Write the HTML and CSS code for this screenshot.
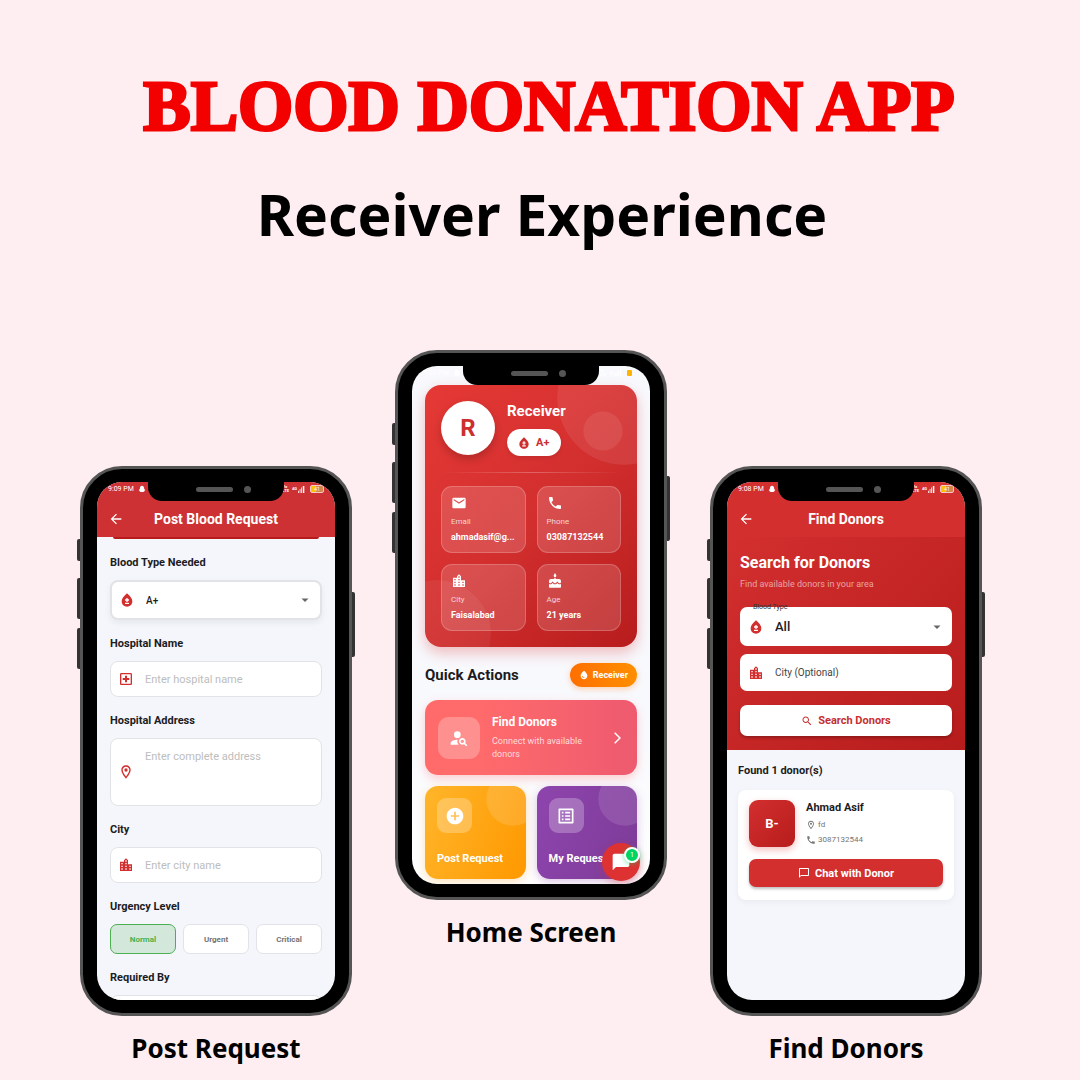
FILE: index.html
```html
<!DOCTYPE html>
<html lang="en">
<head>
<meta charset="utf-8">
<meta name="viewport" content="width=device-width, initial-scale=1">
<title>Blood Donation App</title>
<link rel="stylesheet" href="styles.css">
</head>
<body>
<svg class="sprite" aria-hidden="true">
  <symbol id="back" viewBox="0 0 24 24"><path d="M20 11H7.83l5.59-5.59L12 4l-8 8 8 8 1.41-1.41L7.83 13H20v-2z"/></symbol>
  <symbol id="blood" viewBox="0 0 24 24"><path fill-rule="evenodd" d="M12 2c-5.33 4.55-8 8.48-8 11.8 0 4.98 3.8 8.2 8 8.2s8-3.22 8-8.2c0-3.32-2.67-7.25-8-11.8zM15 18H9v-2h6zM15 13h-2v2h-2v-2H9v-2h2V9h2v2h2z"/></symbol>
  <symbol id="hospital" viewBox="0 0 24 24"><path d="M19 3H5c-1.1 0-1.99.9-1.99 2L3 19c0 1.1.9 2 2 2h14c1.1 0 2-.9 2-2V5c0-1.1-.9-2-2-2zm0 16H5V5h14v14zm-8.5-2h3v-3.5H17v-3h-3.5V7h-3v3.5H7v3h3.5z"/></symbol>
  <symbol id="pin" viewBox="0 0 24 24"><path d="M12 2C8.13 2 5 5.13 5 9c0 5.25 7 13 7 13s7-7.75 7-13c0-3.87-3.13-7-7-7zM7 9c0-2.76 2.24-5 5-5s5 2.24 5 5c0 2.88-2.88 7.19-5 9.88C9.92 16.21 7 11.85 7 9z"/><circle cx="12" cy="9" r="2.5"/></symbol>
  <symbol id="city" viewBox="0 0 24 24"><path d="M15 11V5l-3-3-3 3v2H3v14h18V11h-6zm-8 8H5v-2h2v2zm0-4H5v-2h2v2zm0-4H5V9h2v2zm6 8h-2v-2h2v2zm0-4h-2v-2h2v2zm0-4h-2V9h2v2zm0-4h-2V5h2v2zm6 12h-2v-2h2v2zm0-4h-2v-2h2v2z"/></symbol>
  <symbol id="mail" viewBox="0 0 24 24"><path d="M20 4H4c-1.1 0-1.99.9-1.99 2L2 18c0 1.1.9 2 2 2h16c1.1 0 2-.9 2-2V6c0-1.1-.9-2-2-2zm0 4l-8 5-8-5V6l8 5 8-5v2z"/></symbol>
  <symbol id="call" viewBox="0 0 24 24"><path d="M6.62 10.79c1.44 2.83 3.76 5.14 6.59 6.59l2.2-2.2c.27-.27.67-.36 1.02-.24 1.12.37 2.33.57 3.57.57.55 0 1 .45 1 1V20c0 .55-.45 1-1 1-9.39 0-17-7.61-17-17 0-.55.45-1 1-1h3.5c.55 0 1 .45 1 1 0 1.25.2 2.45.57 3.57.11.35.03.74-.25 1.02l-2.2 2.2z"/></symbol>
  <symbol id="cake" viewBox="0 0 24 24"><path d="M12 6c1.11 0 2-.9 2-2 0-.38-.1-.73-.29-1.03L12 0l-1.71 2.97c-.19.3-.29.65-.29 1.03 0 1.1.9 2 2 2zm4.6 9.99l-1.07-1.07-1.08 1.07c-1.3 1.3-3.58 1.31-4.89 0l-1.07-1.07-1.09 1.07C6.75 16.64 5.88 17 4.96 17c-.73 0-1.4-.23-1.96-.61V21c0 .55.45 1 1 1h16c.55 0 1-.45 1-1v-4.61c-.56.38-1.23.61-1.96.61-.92 0-1.79-.36-2.44-1.01zM18 9h-5V7h-2v2H6c-1.66 0-3 1.34-3 3v1.54c0 1.08.88 1.96 1.96 1.96.52 0 1.02-.2 1.38-.57l2.14-2.13 2.13 2.13c.74.74 2.03.74 2.77 0l2.14-2.13 2.13 2.13c.37.37.86.57 1.38.57 1.08 0 1.96-.88 1.96-1.96V12C21 10.34 19.66 9 18 9z"/></symbol>
  <symbol id="person-search" viewBox="0 0 24 24"><circle cx="10" cy="8" r="4"/><path d="M10.35 14.01C7.62 13.91 2 15.27 2 18v2h9.54c-2.47-2.76-1.23-5.89-1.19-5.99zm9.08 4.01c.36-.59.57-1.28.57-2.02 0-2.21-1.79-4-4-4s-4 1.79-4 4 1.79 4 4 4c.74 0 1.43-.22 2.02-.57L20.59 22 22 20.59l-2.57-2.57zM16 18c-1.1 0-2-.9-2-2s.9-2 2-2 2 .9 2 2-.9 2-2 2z"/></symbol>
  <symbol id="drop" viewBox="0 0 24 24"><path fill-rule="evenodd" d="M12 2c-5.33 4.55-8 8.48-8 11.8 0 4.98 3.8 8.2 8 8.2s8-3.22 8-8.2c0-3.32-2.67-7.25-8-11.8zM7.83 14c.37 0 .67.26.74.62.41 2.22 2.28 2.98 3.64 2.87.43-.02.79.32.79.75 0 .4-.32.73-.72.75-2.13.13-4.62-1.09-5.19-4.12-.08-.45.28-.87.74-.87z"/></symbol>
  <symbol id="add" viewBox="0 0 24 24"><path d="M12 2C6.48 2 2 6.48 2 12s4.48 10 10 10 10-4.48 10-10S17.52 2 12 2zm5 11h-4v4h-2v-4H7v-2h4V7h2v4h4v2z"/></symbol>
  <symbol id="list" viewBox="0 0 24 24"><path d="M19 5v14H5V5h14m1.1-2H3.9c-.5 0-.9.4-.9.9v16.2c0 .4.4.9.9.9h16.2c.4 0 .9-.5.9-.9V3.9c0-.5-.5-.9-.9-.9zM11 7h6v2h-6V7zm0 4h6v2h-6v-2zm0 4h6v2h-6zM7 7h2v2H7zm0 4h2v2H7zm0 4h2v2H7z"/></symbol>
  <symbol id="chat" viewBox="0 0 24 24"><path d="M20 2H4c-1.1 0-2 .9-2 2v18l4-4h14c1.1 0 2-.9 2-2V4c0-1.1-.9-2-2-2z"/></symbol>
  <symbol id="chat-outline" viewBox="0 0 24 24"><path d="M20 2H4c-1.1 0-2 .9-2 2v18l4-4h14c1.1 0 2-.9 2-2V4c0-1.1-.9-2-2-2zm0 14H6l-2 2V4h16v12z"/></symbol>
  <symbol id="search" viewBox="0 0 24 24"><path d="M15.5 14h-.79l-.28-.27C15.41 12.59 16 11.11 16 9.5 16 5.91 13.09 3 9.5 3S3 5.91 3 9.5 5.91 16 9.5 16c1.61 0 3.09-.59 4.23-1.57l.27.28v.79l5 4.99L20.49 19l-4.99-5zm-6 0C7.01 14 5 11.99 5 9.5S7.01 5 9.5 5 14 7.01 14 9.5 11.99 14 9.5 14z"/></symbol>
  <symbol id="caret" viewBox="0 0 24 24"><path d="M5 9l7 7 7-7z"/></symbol>
  <symbol id="chevron" viewBox="0 0 24 24"><path d="M8 3l9 9-9 9" fill="none" stroke="currentColor" stroke-width="2.6"/></symbol>
  <symbol id="ghost" viewBox="0 0 24 24"><path d="M12 2c-4 0-6 3-6 6v3l-3 1 2 3-3 3 4 1 1 2h10l1-2 4-1-3-3 2-3-3-1V8c0-3-2-6-6-6z"/></symbol>
  <symbol id="bars" viewBox="0 0 10 9"><path d="M0 6h1v3H0zM2 4h1v5H2zM4 2h1v7H4zM6 0h2v9H6z"/></symbol>
</svg>

<header class="intro">
  <h1 class="title">BLOOD DONATION APP</h1>
  <p class="subtitle">Receiver Experience</p>
</header>

<main class="gallery">
  <figure class="shot">
    <div class="phone">
      <span class="key key-mute"></span><span class="key key-up"></span><span class="key key-down"></span><span class="key key-power"></span>
      <div class="notch"><span class="speaker"></span><span class="camera"></span></div>
      <div class="screen">
        <header class="appbar appbar-post">
          <div class="status"><span>9:09 PM</span><svg class="i-ghost"><use href="#ghost"/></svg><span class="network"><span class="tick"></span><span class="volte">Vo<br>LTE</span><span class="gen">4G</span><svg class="i-bars"><use href="#bars"/></svg></span><span class="battery">41</span></div>
          <div class="appbar-row">
            <button class="back" aria-label="Back"><svg class="i-16"><use href="#back"/></svg></button>
            <h2 class="appbar-title">Post Blood Request</h2>
          </div>
        </header>
        <form class="form">
          <div class="banner-edge"></div>
          <div class="group">
            <label class="label" for="type">Blood Type Needed</label>
            <div class="field field-select raised"><svg class="i-16"><use href="#blood"/></svg><select class="control" id="type"><option>A+</option></select><svg class="i-caret"><use href="#caret"/></svg></div>
          </div>
          <div class="group">
            <label class="label" for="hospital-name">Hospital Name</label>
            <div class="field"><svg class="i-16"><use href="#hospital"/></svg><input class="control" id="hospital-name" type="text" placeholder="Enter hospital name"></div>
          </div>
          <div class="group">
            <label class="label" for="address">Hospital Address</label>
            <div class="field field-area"><svg class="i-16"><use href="#pin"/></svg><textarea class="control" id="address" placeholder="Enter complete address"></textarea></div>
          </div>
          <div class="group">
            <label class="label" for="city-name">City</label>
            <div class="field"><svg class="i-16"><use href="#city"/></svg><input class="control" id="city-name" type="text" placeholder="Enter city name"></div>
          </div>
          <fieldset class="group">
            <legend class="label">Urgency Level</legend>
            <div class="levels">
              <label class="level"><input type="radio" name="urgency" checked>Normal</label>
              <label class="level"><input type="radio" name="urgency">Urgent</label>
              <label class="level"><input type="radio" name="urgency">Critical</label>
            </div>
          </fieldset>
          <div class="group">
            <label class="label" for="required-by">Required By</label>
            <div class="field"><input class="control" id="required-by" type="text"></div>
          </div>
        </form>
      </div>
    </div>
    <figcaption class="caption">Post Request</figcaption>
  </figure>

  <figure class="shot shot-lead">
    <div class="phone">
      <span class="key key-mute"></span><span class="key key-up"></span><span class="key key-down"></span><span class="key key-power"></span>
      <div class="notch"><span class="speaker"></span><span class="camera"></span></div>
      <div class="screen screen-home">
        <div class="status status-home"><span>9:03 PM</span><svg class="i-ghost"><use href="#ghost"/></svg><span class="network"><span class="volte">Vo<br>LTE</span><span class="gen">4G</span><svg class="i-bars"><use href="#bars"/></svg></span><span class="charge"></span></div>
        <div class="home">
          <section class="profile">
            <div class="profile-top">
              <div class="avatar">R</div>
              <div class="who">
                <h2 class="name">Receiver</h2>
                <span class="type-pill"><svg class="i-14"><use href="#blood"/></svg>A+</span>
              </div>
            </div>
            <hr class="rule">
            <dl class="facts">
              <div class="fact"><svg class="i-16"><use href="#mail"/></svg><dt>Email</dt><dd>ahmadasif@g...</dd></div>
              <div class="fact"><svg class="i-16"><use href="#call"/></svg><dt>Phone</dt><dd>03087132544</dd></div>
              <div class="fact"><svg class="i-16"><use href="#city"/></svg><dt>City</dt><dd>Faisalabad</dd></div>
              <div class="fact"><svg class="i-16"><use href="#cake"/></svg><dt>Age</dt><dd>21 years</dd></div>
            </dl>
          </section>
          <div class="section-head">
            <h2 class="section-title">Quick Actions</h2>
            <span class="role"><svg class="i-10"><use href="#drop"/></svg>Receiver</span>
          </div>
          <a class="find" href="#">
            <span class="find-icon"><svg class="i-20"><use href="#person-search"/></svg></span>
            <span class="find-text"><strong>Find Donors</strong><span>Connect with available donors</span></span>
            <svg class="i-14"><use href="#chevron"/></svg>
          </a>
          <div class="tiles">
            <a class="tile tile-post" href="#"><span class="tile-icon"><svg class="i-20"><use href="#add"/></svg></span>Post Request</a>
            <a class="tile tile-mine" href="#"><span class="tile-icon"><svg class="i-20"><use href="#list"/></svg></span>My Requests</a>
          </div>
        </div>
        <button class="fab" aria-label="Messages"><svg class="i-20"><use href="#chat"/></svg><span class="count">1</span></button>
      </div>
    </div>
    <figcaption class="caption">Home Screen</figcaption>
  </figure>

  <figure class="shot">
    <div class="phone">
      <span class="key key-mute"></span><span class="key key-up"></span><span class="key key-down"></span><span class="key key-power"></span>
      <div class="notch"><span class="speaker"></span><span class="camera"></span></div>
      <div class="screen">
        <header class="appbar">
          <div class="status"><span>9:08 PM</span><svg class="i-ghost"><use href="#ghost"/></svg><span class="network"><span class="tick"></span><span class="volte">Vo<br>LTE</span><span class="gen">4G</span><svg class="i-bars"><use href="#bars"/></svg></span><span class="battery">41</span></div>
          <div class="appbar-row">
            <button class="back" aria-label="Back"><svg class="i-16"><use href="#back"/></svg></button>
            <h2 class="appbar-title">Find Donors</h2>
          </div>
        </header>
        <form class="search">
          <h3 class="search-title">Search for Donors</h3>
          <p class="search-note">Find available donors in your area</p>
          <div class="field field-select field-plain"><label class="float" for="donor-type">Blood Type</label><svg class="i-16"><use href="#blood"/></svg><select class="control control-strong" id="donor-type"><option>All</option></select><svg class="i-caret"><use href="#caret"/></svg></div>
          <div class="field field-plain"><svg class="i-16"><use href="#city"/></svg><input class="control control-dark" type="text" aria-label="City" placeholder="City (Optional)"></div>
          <button class="search-go" type="button"><svg class="i-12"><use href="#search"/></svg>Search Donors</button>
        </form>
        <section class="results">
          <h3 class="found">Found 1 donor(s)</h3>
          <article class="donor">
            <div class="donor-top">
              <div class="donor-type">B-</div>
              <div class="donor-info">
                <h4 class="donor-name">Ahmad Asif</h4>
                <p class="donor-line"><svg class="i-10"><use href="#pin"/></svg>fd</p>
                <p class="donor-line"><svg class="i-10"><use href="#call"/></svg>3087132544</p>
              </div>
            </div>
            <button class="donor-chat"><svg class="i-12"><use href="#chat-outline"/></svg>Chat with Donor</button>
          </article>
        </section>
      </div>
    </div>
    <figcaption class="caption">Find Donors</figcaption>
  </figure>
</main>
</body>
</html>
```
FILE: styles.css
```css
* { box-sizing: border-box; }

body {
  margin: 0;
  background: #feeef1;
  color: #000;
  font-family: Roboto, "Liberation Sans", sans-serif;
}

h1, h2, h3, h4, p, dl, dd, figure, fieldset { margin: 0; padding: 0; border: 0; }
button, input, select, textarea { font: inherit; color: inherit; border: 0; margin: 0; padding: 0; background: none; }
a { color: inherit; text-decoration: none; }
svg { fill: currentColor; flex: none; display: block; }
.sprite { position: absolute; width: 0; height: 0; }

.i-10 { width: 10px; height: 10px; }
.i-12 { width: 12px; height: 12px; }
.i-14 { width: 14px; height: 14px; }
.i-16 { width: 16px; height: 16px; }
.i-20 { width: 20px; height: 20px; }
.i-caret { width: 12px; height: 12px; color: #666; }

/* Heading */
.intro { padding: 66px 24px 100px; text-align: center; }
.title {
  font: 700 71px/80px "Liberation Serif", serif;
  color: #f30000;
  padding-left: 18px;
  -webkit-text-stroke: 3px #f30000;
}
.subtitle {
  font: 700 57px/72px "Noto Sans", sans-serif;
  padding: 32px 0 0 4px;
}

/* Phones */
.gallery {
  display: grid;
  grid-template-columns: repeat(3, minmax(0, 272px));
  justify-content: center;
  gap: 43px;
  padding: 0 18px 12px 0;
}
.shot { padding-top: 116px; }
.shot-lead { padding-top: 0; }
.caption {
  margin-top: 14px;
  font: 700 26px/36px "Noto Sans", sans-serif;
  text-align: center;
}
.phone {
  position: relative;
  display: grid;
  grid-template-rows: minmax(0, 1fr);
  min-height: 0;
  aspect-ratio: 272 / 550;
  padding: 13px 14px;
  border: 3px solid #555;
  border-radius: 42px;
  background: #000;
}
.key { position: absolute; width: 3px; height: 41px; left: -6px; background: #333; border-radius: 2px 0 0 2px; }
.key-mute { top: 70px; height: 22px; }
.key-up { top: 109px; }
.key-down { top: 159px; }
.key-power { top: 123px; left: auto; right: -6px; height: 65px; border-radius: 0 2px 2px 0; }
.notch {
  position: absolute;
  z-index: 2;
  top: 12px;
  left: 50%;
  width: 136px;
  height: 20px;
  margin-left: -68px;
  display: flex;
  align-items: center;
  justify-content: flex-end;
  gap: 11px;
  padding: 0 33px 4px 0;
  border-radius: 0 0 14px 14px;
  background: #000;
}
.speaker { width: 37px; height: 5px; border-radius: 3px; background: #555; }
.camera { width: 7px; height: 7px; border-radius: 50%; background: #555; }
.screen {
  position: relative;
  overflow: hidden;
  border-radius: 25px;
  background: #f4f6fb;
  color: #1c1c1e;
}

/* Status and app bars */
.status {
  display: flex;
  align-items: center;
  gap: 4px;
  height: 14px;
  padding: 0 11px 0 11px;
  font-size: 7px;
  line-height: 14px;
  color: #fff;
}
.i-ghost { width: 8px; height: 8px; }
.network { display: flex; align-items: center; gap: 1px; margin-left: auto; }
.tick { width: 1px; height: 7px; background: #fff; }
.volte { font-size: 4px; line-height: 4px; font-weight: 700; padding: 0 2px; }
.gen { font-size: 4px; line-height: 8px; font-weight: 700; }
.i-bars { width: 8px; height: 7px; }
.battery {
  width: 14px;
  height: 8px;
  border: 1px solid #f3c9c9;
  border-radius: 2px;
  background: linear-gradient(90deg, #ffc107 40%, #d9844a 40%);
  font-size: 5px;
  line-height: 6px;
  text-align: center;
}
.appbar { height: 55px; background: #d32f2f; color: #fff; }
.appbar-post { background: #cd3133; }
.appbar-row {
  display: grid;
  grid-template-columns: 26px 1fr 26px;
  align-items: center;
  height: 46px;
  padding: 0 11px;
}
.back { display: flex; }
.appbar-title { font-size: 14px; line-height: 18px; font-weight: 700; text-align: center; white-space: nowrap; }

/* Fields */
.form { display: flex; flex-direction: column; gap: 16px; padding: 0 13px; }
.banner-edge { height: 2px; margin: 0 3px; border-radius: 0 0 8px 8px; background: #b71c1c; }
.label { display: block; padding: 0; margin-bottom: 9px; font-size: 11px; line-height: 16px; font-weight: 700; }
.field {
  position: relative;
  display: flex;
  align-items: center;
  gap: 11px;
  height: 36px;
  padding: 0 9px 0 7px;
  border: 1px solid #e2e3e6;
  border-radius: 8px;
  background: #fff;
  color: #d32f2f;
}
.field-select { height: 40px; }
.field-area { height: 68px; }
.raised { border-width: 2px; box-shadow: 0 3px 6px rgba(0, 0, 0, .06); }
.control { flex: 1; min-width: 0; height: 100%; font-size: 11px; color: #1c1c1e; outline: 0; appearance: none; resize: none; }
.control::placeholder { color: #bdbdbd; opacity: 1; }
select.control { font-size: 10px; font-weight: 500; }
textarea.control { padding: 10px 0; line-height: 16px; }
.levels { display: grid; grid-template-columns: repeat(3, 1fr); gap: 7px; }
.level {
  display: flex;
  align-items: center;
  justify-content: center;
  height: 30px;
  border: 1px solid #e2e3e6;
  border-radius: 7px;
  background: #fff;
  color: #757575;
  font-size: 8px;
  font-weight: 700;
}
.level input { position: absolute; opacity: 0; }
.level:has(:checked) { border-color: #4caf50; background: #d3e8da; color: #4caf50; }

/* Home */
.screen-home { background: linear-gradient(#f8f9fd 70%, #fff); }
.status-home { height: 19px; padding-bottom: 6px; padding-right: 18px; }
.charge { width: 5px; height: 6px; border-radius: 1px; background: #ffb300; }
.home { padding: 0 13px; }
.profile {
  padding: 16px;
  border-radius: 16px;
  background:
    radial-gradient(circle 20px at 178px 46px, rgba(255, 255, 255, .08) 95%, transparent),
    radial-gradient(circle 67px at 199px 13px, rgba(255, 255, 255, .08) 99%, transparent),
    radial-gradient(circle 54px at 12px 249px, rgba(255, 255, 255, .06) 99%, transparent),
    linear-gradient(135deg, #e53935, #d32f2f 50%, #b71c1c);
  color: #fff;
  box-shadow: 0 6px 14px rgba(211, 47, 47, .3);
}
.profile-top { display: flex; gap: 12px; height: 54px; }
.avatar {
  display: grid;
  place-items: center;
  width: 54px;
  height: 54px;
  border-radius: 50%;
  background: #fff;
  color: #cd2f2f;
  font-size: 24px;
  font-weight: 700;
  box-shadow: 0 4px 8px rgba(0, 0, 0, .2);
}
.name { font-size: 15px; line-height: 20px; font-weight: 700; }
.type-pill {
  display: flex;
  align-items: center;
  gap: 5px;
  width: 54px;
  height: 27px;
  margin-top: 8px;
  padding: 0 10px;
  border-radius: 14px;
  background: #fff;
  color: #cd2f2f;
  font-size: 11px;
  font-weight: 700;
  box-shadow: 0 2px 4px rgba(0, 0, 0, .1);
}
.rule { height: 1px; margin: 17px 0 13px; border: 0; background: linear-gradient(90deg, transparent, rgba(255, 255, 255, .25), transparent); }
.facts { display: grid; grid-template-columns: 1fr 1fr; gap: 11px; }
.fact {
  height: 67px;
  padding: 8px 9px;
  border: 1px solid rgba(255, 255, 255, .2);
  border-radius: 11px;
  background: rgba(255, 255, 255, .15);
}
.fact dt { margin-top: 5px; font-size: 8px; line-height: 12px; color: #f6d4d4; }
.fact dd { margin-top: 3px; font-size: 9px; line-height: 12px; font-weight: 700; white-space: nowrap; }
.section-head { display: flex; align-items: center; justify-content: space-between; margin: 16px 0 13px; }
.section-title { font-size: 15px; line-height: 24px; font-weight: 700; }
.role {
  display: flex;
  align-items: center;
  gap: 4px;
  height: 24px;
  padding: 0 9px;
  border-radius: 12px;
  background: linear-gradient(90deg, #ff6f00, #ff8f00);
  color: #fff;
  font-size: 9px;
  font-weight: 700;
  box-shadow: 0 2px 6px rgba(255, 111, 0, .3);
}
.find {
  display: flex;
  align-items: center;
  gap: 12px;
  height: 75px;
  padding: 0 13px;
  border-radius: 13px;
  background: linear-gradient(90deg, #ff6b6b 25%, #ee5a6f);
  color: #fff;
  box-shadow: 0 4px 10px rgba(255, 107, 107, .3);
}
.find-icon { display: grid; place-items: center; width: 42px; height: 42px; border-radius: 11px; background: rgba(255, 255, 255, .25); }
.find-text { flex: 1; display: grid; gap: 5px; font-size: 9px; line-height: 13px; color: #ffdadc; }
.find-text strong { font-size: 12px; line-height: 16px; color: #fff; }
.tiles { display: grid; grid-template-columns: 1fr 1fr; gap: 11px; margin-top: 11px; }
.tile {
  display: flex;
  flex-direction: column;
  justify-content: space-between;
  height: 93px;
  padding: 12px;
  border-radius: 13px;
  color: #fff;
  font-size: 11px;
  line-height: 16px;
  font-weight: 700;
  white-space: nowrap;
}
.tile-post {
  background: radial-gradient(circle 27px at 88px 13px, rgba(255, 255, 255, .13) 97%, transparent), linear-gradient(110deg, #ffb52a, #ff9800);
  box-shadow: 0 3px 10px rgba(255, 167, 38, .3);
}
.tile-mine {
  background: radial-gradient(circle 27px at 88px 13px, rgba(255, 255, 255, .11) 97%, transparent), linear-gradient(110deg, #8e44ad, #7d3c98);
  box-shadow: 0 3px 10px rgba(142, 68, 173, .3);
}
.tile-icon { display: grid; place-items: center; width: 35px; height: 35px; border-radius: 9px; background: rgba(255, 255, 255, .25); }
.fab {
  position: absolute;
  right: 10px;
  bottom: 3px;
  display: grid;
  place-items: center;
  width: 38px;
  height: 38px;
  border-radius: 50%;
  background: #de3232;
  color: #fff;
  box-shadow: 0 3px 8px rgba(211, 47, 47, .35);
}
.count {
  position: absolute;
  top: 4px;
  right: 0;
  width: 16px;
  height: 16px;
  border: 2px solid #fff;
  border-radius: 50%;
  background: #00d563;
  font-size: 7px;
  line-height: 12px;
  box-shadow: 0 1px 5px rgba(0, 213, 99, .5);
}

/* Find donors */
.search { padding: 14px 13px; background: linear-gradient(135deg, #d32f2f, #b71c1c); color: #fff; }
.search-title { font-size: 16px; line-height: 24px; font-weight: 700; }
.search-note { margin: 2px 0 16px; font-size: 9px; line-height: 14px; color: #eaa3a3; }
.field-plain { border: 0; margin-bottom: 8px; padding-left: 8px; border-radius: 7px; height: 37px; }
.field-select.field-plain { height: 39px; }
.float { position: absolute; left: 13px; top: -5px; font-size: 7px; line-height: 11px; color: #333; }
select.control-strong { font-size: 13px; font-weight: 500; }
.control-dark::placeholder { font-size: 10px; color: #444; }
.search-go, .donor-chat {
  display: flex;
  align-items: center;
  justify-content: center;
  gap: 5px;
  width: 100%;
  border-radius: 7px;
  font-size: 11px;
  font-weight: 700;
  box-shadow: 0 2px 3px rgba(0, 0, 0, .25);
}
.search-go { height: 31px; margin-top: 14px; background: #fff; color: #c62f2f; }
.donor-chat { height: 28px; margin-top: 12px; background: #d32f2f; color: #fff; }
.results { padding: 13px 11px; }
.found { font-size: 11px; line-height: 16px; font-weight: 700; }
.donor { margin-top: 11px; padding: 10px 11px 13px; border-radius: 8px; background: #fff; box-shadow: 0 2px 6px rgba(0, 0, 0, .05); }
.donor-top { display: flex; gap: 11px; }
.donor-type {
  display: grid;
  place-items: center;
  width: 46px;
  height: 47px;
  border-radius: 9px;
  background: linear-gradient(135deg, #d32f2f, #b71c1c);
  color: #fff;
  font-size: 13px;
  font-weight: 700;
  box-shadow: 0 3px 7px rgba(211, 47, 47, .3);
}
.donor-name { font-size: 11px; line-height: 16px; font-weight: 700; }
.donor-line { display: flex; align-items: center; gap: 2px; margin-top: 2px; font-size: 8px; line-height: 13px; color: #757575; }

@media (max-width: 760px) {
  .gallery { grid-template-columns: minmax(0, 272px); padding-right: 0; }
  .shot { padding-top: 0; }
  .title { font-size: 40px; line-height: 48px; padding-left: 0; }
  .subtitle { font-size: 32px; line-height: 40px; }
}
```
